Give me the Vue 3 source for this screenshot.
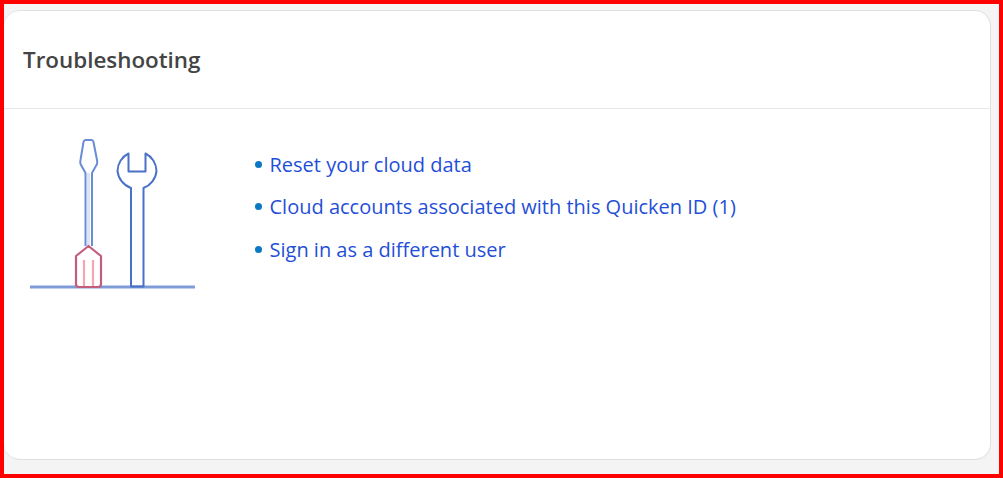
<template>
  <div class="frame">
    <section class="card">
      <header class="card-head">
        <h2 class="card-title">Troubleshooting</h2>
      </header>
      <div class="card-body">
        <svg class="tools" width="170" height="152" viewBox="28 138 170 152" fill="none">
          <path d="M30 287H195" stroke="#7f9bd8" stroke-width="3" />
          <!-- screwdriver -->
          <path d="M88.500 173V246" stroke="#dbe3f5" stroke-width="3" />
          <path d="M85.500 246V173L80.500 164Q80 162 80.500 160L83.500 142Q84 140 85.500 140H91.500Q93 140 93.500 142L97 160Q97.500 162 97 164L92 173V246" stroke="#6a8bd6" stroke-width="2" stroke-linejoin="round" />
          <path d="M88.500 246L101 256V284Q101 287 98 287H79Q76 287 76 284V256Z" fill="#fff" stroke="#c25d7c" stroke-width="2.200" stroke-linejoin="round" />
          <path d="M84 260V286M93 260V286" stroke="#f2a7b3" stroke-width="2.200" />
          <!-- wrench -->
          <path d="M128.500 153.500V171.500H145.500V153.500A20 20 0 0 1 156.500 171A20 20 0 0 1 143.500 188V286.500H131V188A20 20 0 0 1 117.500 171A20 20 0 0 1 128.500 153.500Z" stroke="#4a71c8" stroke-width="2" stroke-linejoin="round" />
        </svg>
        <ul class="links">
          <li v-for="link in links" :key="link" class="link-row">
            <span class="dot"></span>
            <a href="#" class="link">{{ link }}</a>
          </li>
        </ul>
      </div>
    </section>
  </div>
</template>

<script setup>
const links = [
  'Reset your cloud data',
  'Cloud accounts associated with this Quicken ID (1)',
  'Sign in as a different user'
]
</script>

<style scoped>
.frame {
  box-sizing: border-box;
  width: 1003px;
  height: 478px;
  border: 4px solid #ff0000;
  background: #f4f4f4;
  padding: 6px 8px 14px 0;
  display: flex;
  font-family: "Open Sans", "Noto Sans", sans-serif;
}

.card {
  flex: 1;
  display: flex;
  flex-direction: column;
  background: #fff;
  border: 1px solid #e0e0e0;
  border-left: 0;
  border-radius: 16px;
}

.card-head {
  height: 98px;
  box-sizing: border-box;
  display: flex;
  align-items: center;
  padding-left: 19px;
  border-bottom: 1px solid #e8e8e8;
}

.card-title {
  margin: 0;
  font-size: 22.4px;
  font-weight: 600;
  color: #444;
}

.card-body {
  display: flex;
  align-items: flex-start;
  padding: 29px 0 0 24px;
}

.tools {
  flex: none;
}

.links {
  list-style: none;
  margin: 14px 0 0 57px;
  padding: 0;
  display: flex;
  flex-direction: column;
  gap: 17.300px;
}

.link-row {
  display: flex;
  align-items: center;
  gap: 7.500px;
  height: 25px;
}

.dot {
  width: 7px;
  height: 7px;
  border-radius: 50%;
  background: #0a78c2;
}

.link {
  font-size: 20px;
  color: #1f4fd8;
  text-decoration: none;
}
</style>
